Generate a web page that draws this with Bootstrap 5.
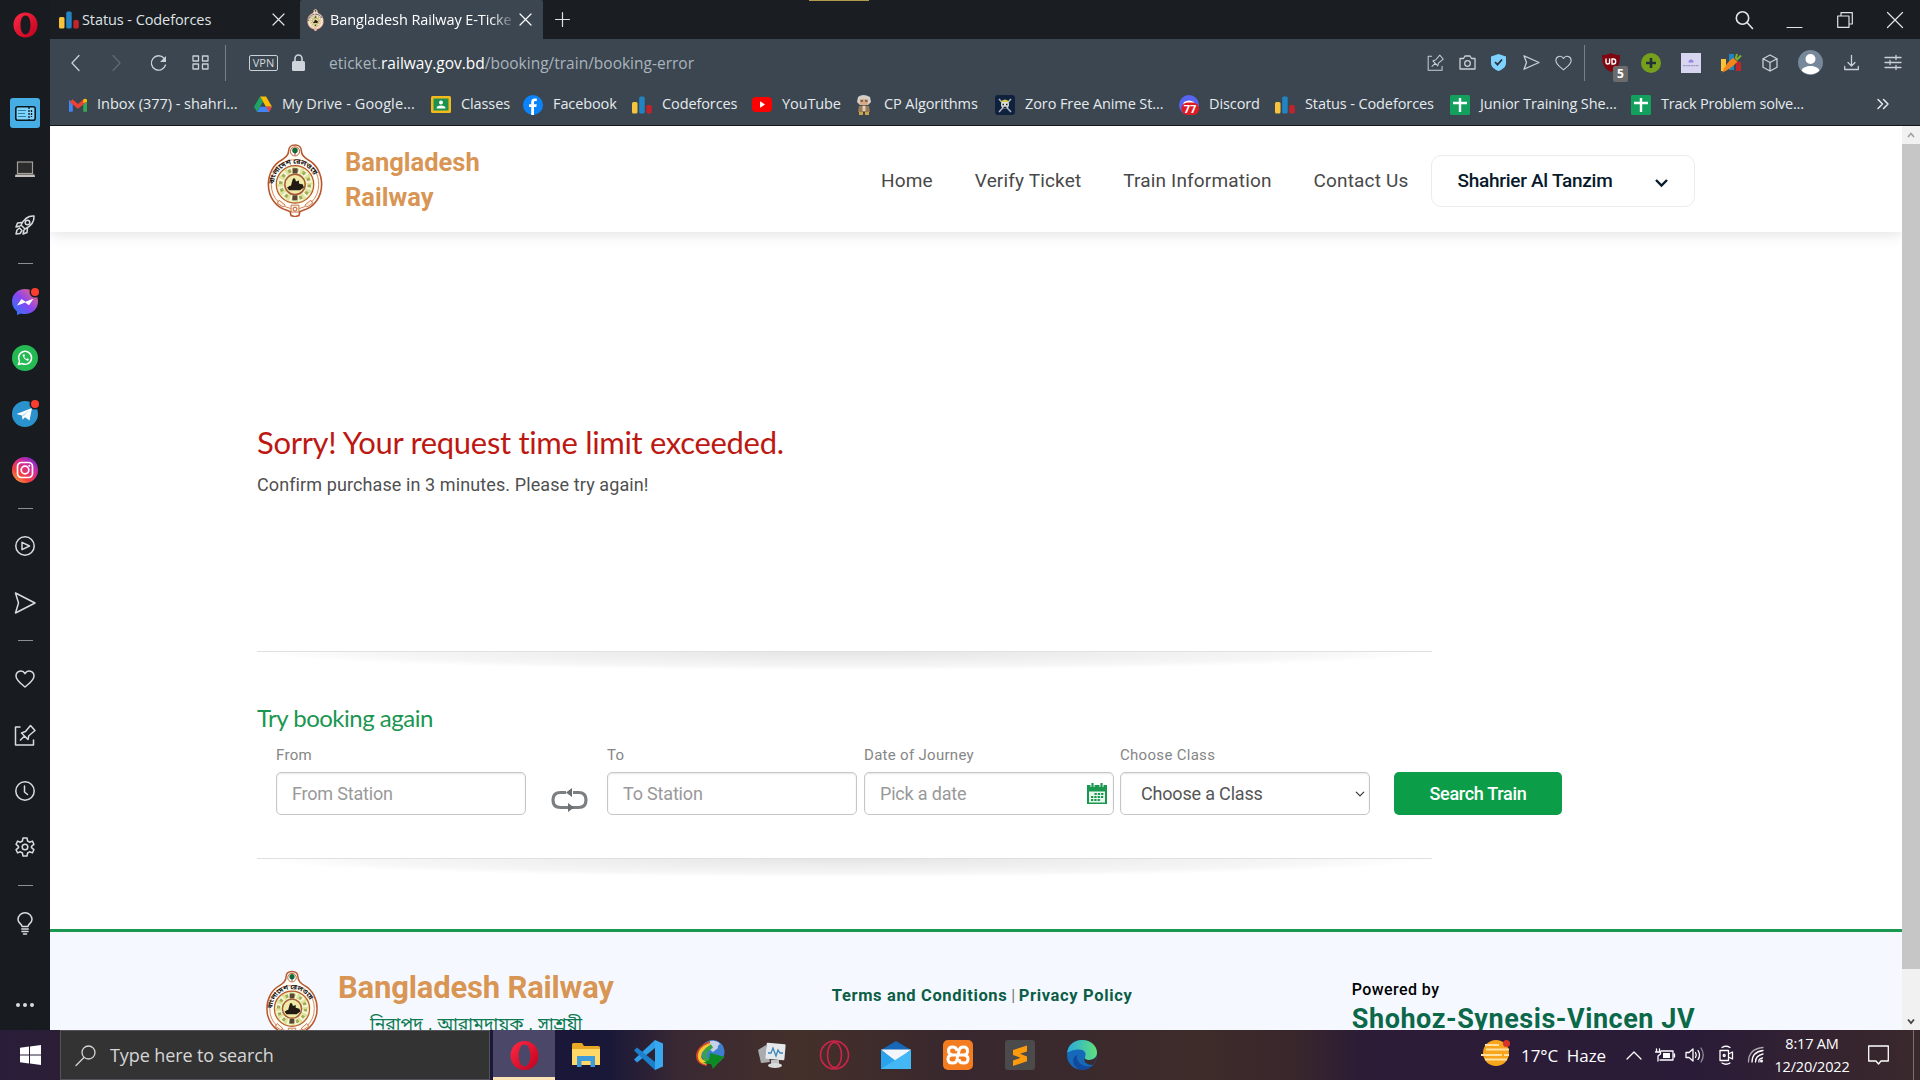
<!DOCTYPE html>
<html lang="en">
<head>
<meta charset="utf-8">
<title>Bangladesh Railway E-Ticketing Service</title>
<link href="https://cdn.jsdelivr.net/npm/bootstrap@5.3.0/dist/css/bootstrap.min.css" rel="stylesheet">
<style>
body{width:1920px;height:1080px;overflow:hidden;font-family:Roboto,"Liberation Sans",sans-serif;background:#fff}
svg{display:block;flex:none;overflow:visible}
.ln{fill:none;stroke:currentColor;stroke-width:var(--sw,1.5);stroke-linejoin:round;stroke-linecap:round}
.ui{font-family:"Open Sans","Noto Sans",sans-serif;font-size:14.5px;letter-spacing:-.1px;color:#e6eaee}
.screen{height:1030px}
/* browser side panel */
.side{width:50px;background:#181c20;color:#d8dcdf}
.side .logo-o{height:85px;padding-top:12px}
.side .it{height:56.2px}
.side .sep{height:20px}
.side .sep i{width:15px;height:1px;background:#8b9095}
.tile{width:30px;height:30px;border-radius:3px;background:#46aee4}
.dot{position:absolute;left:19px;top:14px;width:8px;height:8px;border-radius:50%;background:#ff3d2e;box-shadow:0 0 0 1.5px #181c20}
/* tabs */
.tabs{height:39px;background:#1a1d22;position:relative;color:#dfe3e6;--sw:1.2}
.tabs .goldbar{position:absolute;left:759px;top:0;width:60px;height:1px;background:#b59a4e}
.tab1{width:250px;padding-left:9px}
.tab2{width:243px;background:#3b4650;padding-left:7px;border-radius:2px 2px 0 0;color:#fff}
.tab1 .ttl{width:190px;margin-left:3px;letter-spacing:-.08px}
.tab2 .ttl{width:183px;margin-left:6px;letter-spacing:-.1px;-webkit-mask-image:linear-gradient(90deg,#000 88%,rgba(0,0,0,.15))}
.plus{margin-left:12px}
.win{margin-right:17px;color:#e2e5e8}
.win svg:nth-child(1){margin-right:34px;--sw:1.6}
.win svg:nth-child(2){margin-right:35px}
.win svg:nth-child(3){margin-right:34px}
/* address bar */
.addr{height:47px;background:#3b4650;color:#c9d0d6;--sw:1.3}
.vr-line{width:1px;height:36px;background:#75808a}
.vpn{width:29px;height:16px;border:1px solid #c9d0d6;border-radius:2px;font-size:11px;line-height:14px;letter-spacing:0;color:#d4dade}
.url{font-size:15.5px;letter-spacing:0;color:#aab4bd;margin-left:24px;padding-top:2px}
.url b{font-weight:400;color:#fff}
.bad{position:absolute;left:11px;top:13px;width:15px;height:16px;background:#6b6b6b;border-radius:2px;font:bold 12px/16px "Open Sans",sans-serif;color:#fff}
/* bookmarks */
.marks{height:40px;background:#3b4650;border-bottom:1px solid #15181b;padding:0 0 3px 19px}
.marks .bm{gap:10px}
.marks .bm svg{margin-top:1px}
.marks .bm:nth-child(1){width:185px;letter-spacing:-.03px}.marks .bm:nth-child(2){width:177px;letter-spacing:.1px}.marks .bm:nth-child(3){width:92px}
.marks .bm:nth-child(4){width:109px}.marks .bm:nth-child(5){width:120px}.marks .bm:nth-child(6){width:103px}
.marks .bm:nth-child(7){width:140px}.marks .bm:nth-child(8){width:184px}.marks .bm:nth-child(9){width:96px}
.marks .bm:nth-child(10){width:175px}.marks .bm:nth-child(11){width:181px}.marks .bm:nth-child(12){width:246px}
/* site */
.site{width:1852px;background:#fff;overflow:hidden}
.top{height:106px;padding:2px 0 0 217px;box-shadow:0 2px 14px rgba(0,0,0,.12);position:relative}
.brand{font-weight:700;font-size:25.5px;line-height:35px;color:#d99554;width:480px;margin-left:22px}
.menu a{font-size:19px;letter-spacing:.16px;color:#484848;text-decoration:none}
.menu{gap:42px;margin-left:56px;padding-top:2px}
.user{width:264px;height:52px;border:1px solid #ececec;border-radius:10px;margin:2px 0 0 23px;padding:0 26px 0 25px;font-weight:500;font-size:19px;letter-spacing:-.27px;color:#071a2c}
.msg{margin:192px 0 0 207px}
.msg h1{font:400 31px/36px Lato,sans-serif;letter-spacing:-.32px;color:#bd1812;margin:0 0 13px}
.msg p{font-size:18px;line-height:24px;letter-spacing:.1px;color:#505050;margin:0}
.rule{width:1175px;height:19px;margin-left:207px;border-top:1px solid #e0e0e0;background:radial-gradient(50% 100% at 50% 0,rgba(0,0,0,.1),rgba(0,0,0,.06) 50%,rgba(0,0,0,.035) 80%,transparent)}
.again{font:400 24px/30px Lato,sans-serif;letter-spacing:-.5px;color:#1b9650;margin:33px 0 12px 207px}
.book{margin-left:226px}
.book label{display:block;font-size:15px;line-height:20px;letter-spacing:.3px;color:#868686;margin-bottom:7px}
.fld{width:250px;position:relative}
.fld .form-control,.fld .form-select{height:43px;border:1px solid #c6c6c6;border-radius:5px;font-size:18px;letter-spacing:-.18px;padding:0 15px 1px;box-shadow:inset 0 1px 2px rgba(0,0,0,.1);color:#555}
.fld .form-control::placeholder{color:#999}
.fld .form-select{padding-left:20px;background-size:10px 12px;background-position:right 4px center;color:#555}
.fld .cal{position:absolute;right:7px;top:38px}
.swap{width:81px;padding-top:27px}
.go{width:168px;height:43px;margin:27px 0 0 24px;border-radius:5px;background:#0c9d49;border:0;color:#fff;font-size:18px;font-weight:500;letter-spacing:-.3px;padding:0 0 1px}
.foot{height:110px;margin-top:52px;border-top:3px solid #1b9850;background:#f5f9ff;padding-left:216px}
.foot .fname{font-weight:700;font-size:31px;line-height:36px;letter-spacing:-.18px;color:#d99554}
.foot .bn{font:400 17.6px/26px "Liberation Sans","Noto Sans Bengali",sans-serif;color:#0c7a50;margin:5px 0 0 32px;white-space:nowrap}
.foot .links{font-weight:700;font-size:16.5px;color:#0b5d45;letter-spacing:.64px;margin:52px 0 0 218px;line-height:24px;width:519px}
.foot .links span{font-weight:400;letter-spacing:0;font-size:16px;color:#777;margin:0 -1px 0 -1px}
.foot .pw{font-weight:500;font-size:16px;letter-spacing:.42px;color:#000;line-height:24px}
.foot .jv{font-weight:700;font-size:27px;letter-spacing:.55px;color:#0b6848;line-height:34px}
.sbar{width:18px;background:#f1f1f1}
.sbar .thumb{height:825px;background:#c6c6c6}
/* taskbar */
.task{height:50px;--sw:1.3;background:linear-gradient(90deg,#291d3a 0,#2b1e35 60px,#1a173a 500px,#1a1838 610px,#3a2933 680px,#44302a 800px,#38272e 960px,#3e2c2b 1200px,#38262c 1300px,#2c1c36 1360px,#2a1b38 1700px,#36252e 1850px,#3a282c 1920px)}
.start{width:60px}
.find{width:430px;background:#333;border:1px solid #55525a;color:#d6d6d6;font-size:18px;padding-left:14px;gap:14px}
.tapp{width:62px}
.tapp.on{background:#4a4768;border-bottom:3px solid #fbe3b5;padding-top:3px;margin-left:3px}
.tray{color:#fff;padding-right:6px}
.tray .wx{font-size:17px;letter-spacing:-.08px;margin:2px 20px 0 11px}
.tray .clk{font-size:14.5px;line-height:23px;letter-spacing:-.18px;width:76px;margin:0 18px 0 10px}
.tray .edge-line{width:1px;height:50px;background:#77707a;margin-left:24px}
</style>
<script src="https://cdn.jsdelivr.net/npm/bootstrap@5.3.0/dist/js/bootstrap.bundle.min.js"></script>
</head>
<body>
<svg width="0" height="0" class="position-absolute">
<defs>
<linearGradient id="gOp" x1="0" y1="0" x2="1" y2="1"><stop offset="0" stop-color="#ff2a45"/><stop offset="1" stop-color="#c0001c"/></linearGradient>
<linearGradient id="gMs" x1="0" y1="1" x2="1" y2="0"><stop offset="0" stop-color="#1d7dfb"/><stop offset=".5" stop-color="#8a45f0"/><stop offset="1" stop-color="#ff6b6b"/></linearGradient>
<linearGradient id="gIg" x1="0" y1="1" x2=".8" y2="0"><stop offset="0" stop-color="#fdc43f"/><stop offset=".35" stop-color="#f4413d"/><stop offset=".7" stop-color="#d12a9e"/><stop offset="1" stop-color="#7a2cd0"/></linearGradient>
<linearGradient id="gEd" x1="0" y1="0" x2="1" y2="0"><stop offset="0" stop-color="#2aa9e0"/><stop offset="1" stop-color="#5fe07a"/></linearGradient>
<path id="arcBn" d="M7.2 46a21.300 21.300 0 1 1 41.600 0"/>
</defs>
<symbol id="opera" viewBox="0 0 26 26"><path fill="url(#gOp)" fill-rule="evenodd" d="M13 0c7 0 12.500 5.500 12.500 13S20 26 13 26 .5 20.500 .5 13 6 0 13 0zM13 3.200C9.700 3.200 7.800 7.500 7.800 13s1.900 9.800 5.200 9.800 5.200-4.300 5.200-9.800S16.300 3.200 13 3.200z"/></symbol>
<symbol id="cf" viewBox="0 0 20 20"><rect y="7" width="5.500" height="11.500" rx="1.500" fill="#f5c43c"/><rect x="7.200" y="1.500" width="5.500" height="17" rx="1.500" fill="#2384c4"/><rect x="14.300" y="10" width="5.500" height="8.500" rx="1.500" fill="#c0242c"/></symbol>
<symbol id="sheet" viewBox="0 0 20 20"><rect width="20" height="20" rx="1.500" fill="#12a05c"/><path d="M10 3v14M3 8h14" stroke="#fff" stroke-width="2.400"/></symbol>
<symbol id="send" viewBox="0 0 22 22"><path class="ln" d="M1.500 1l19.500 10-19.500 10 3-10z"/></symbol>
<symbol id="heart" viewBox="0 0 20 18"><path class="ln" d="M10 17C6 13.500 1 10.500 1 6c0-5 6.500-6.800 9-2.300C12.500-.8 19 1 19 6c0 4.500-5 7.500-9 11z"/></symbol>
<symbol id="pin" viewBox="0 0 22 22"><path class="ln" d="M6 3H1.500v18h18v-5M6.500 16l4-4M7.500 9l6.500 6.500.8-3.800L21 6.500 16.500 1.500 11.500 7.500z"/></symbol>
<symbol id="rail" viewBox="0 0 56 74">
<path d="M28 1c4.300 0 6.500 2.800 6.500 6.200 0 4.500 2.500 6.500 7 9C50.500 21 55 31 55 41c0 13-8 23-18 26l-4 1.500-1 4-4 1.300-4-1.300-1-4-4-1.500C9 64 1 54 1 41c0-10 4.500-20 13.500-24.800 4.500-2.500 7-4.500 7-9C21.500 3.800 23.700 1 28 1z" fill="#fffdf6" stroke="#b8562c" stroke-width="1.600"/>
<path d="M28 16c14 0 24 10 24 25S41 65 28 66C15 65 4 56 4 41s10-25 24-25z" fill="none" stroke="#c9683a" stroke-width=".8"/>
<circle cx="28" cy="7.500" r="4.600" fill="#fff" stroke="#b8562c"/><circle cx="28" cy="6.500" r="2.800" fill="#146a35"/><path d="M27.500 8h1v3h-1z" fill="#333"/>
<circle cx="28" cy="41" r="19" fill="#dfe39a" stroke="#b8562c" stroke-width="1.200"/>
<circle cx="28" cy="41" r="14.500" fill="none" stroke="#f4f6dc" stroke-width="6.500" stroke-dasharray="5 2.600"/><circle cx="28" cy="41" r="14.500" fill="none" stroke="#a3ae52" stroke-width="3.600" stroke-dasharray="3 4.600"/>
<path d="M25.500 24.500h5v5.500h-5zM25.500 52h5v5h-5z" fill="#5b4634"/>
<circle cx="28" cy="41" r="10.300" fill="#efeaa8" stroke="#a85a35" stroke-width="1.500"/><path d="M20 44c2-1 3-2 4-2l1-4 1-3h2l1 3 3-1v3l4 1 1 3-4 3H22z" fill="#221a14"/>
<path d="M12 57l6 5-2 2-6-4zM44 57l-6 5 2 2 6-4zM24 62h8v7h-8z" fill="#fff3e0" stroke="#b8562c" stroke-width=".8"/><circle cx="28" cy="66" r="2" fill="none" stroke="#b8562c"/>
<text font-family="Noto Sans Bengali,sans-serif" font-size="7.200" font-weight="700" fill="#151515"><textPath href="#arcBn" startOffset="5">বাংলাদেশ রেলওয়ে</textPath></text>
</symbol>
</svg>

<div class="screen d-flex">
  <nav class="side d-flex flex-column align-items-center">
    <div class="logo-o"><svg width="25" height="26"><use href="#opera"/></svg></div>
    <div class="it d-flex align-items-center"><div class="tile d-flex align-items-center justify-content-center"><svg width="21" height="15" viewBox="0 0 21 15"><rect x=".8" y=".8" width="19.400" height="13.400" rx="2" fill="#7fd5fb" stroke="#0c1820" stroke-width="1.600"/><path d="M14 1v13M16.500 4v7" stroke="#0c1820" stroke-width="1.300" stroke-dasharray="2 1"/><path d="M3 4.500h8M3 7.500h7M3 10.500h8" stroke="#2a80ab"/></svg></div></div>
    <div class="it d-flex align-items-center"><svg width="20" height="17" viewBox="0 0 20 17"><rect x="2.500" y="1" width="15" height="11.500" fill="#2c2c2c" stroke="#a59f9a" stroke-width="1.200"/><path d="M.5 13.500h19l.5 2.500H0z" fill="#c5c0ba"/></svg></div>
    <div class="it d-flex align-items-center"><svg width="20" height="20" viewBox="0 0 20 20"><path class="ln" d="M19 1c-6-.5-10 3-13 9l4 4c6-3 9.500-7 9-13zM7 7.500L2.500 8 1 12l4-1M12.500 13L12 17.500 8 19l1-4M4.500 13l2.500 2.500L5 18.500l-4 .5 1-4z"/><circle class="ln" cx="12.500" cy="7.500" r="2.300"/></svg></div>
    <div class="sep d-flex align-items-center"><i></i></div>
    <div class="it d-flex align-items-center position-relative"><svg width="26" height="26" viewBox="0 0 26 26"><path fill="url(#gMs)" d="M13 0c7.500 0 13 5.500 13 12.500S20.500 25 13 25c-1.500 0-2.700-.2-4-.6L5 26v-3.600C2 20.200 0 16.800 0 12.500 0 5.500 5.500 0 13 0z"/><path fill="#fff" d="M5 16.500l4.500-6.500 4 2.700 3-1.200 5-1.800-4.500 6.500-4-2.700-3.500 1.500z"/></svg><span class="dot"></span></div>
    <div class="it d-flex align-items-center"><svg width="26" height="26" viewBox="0 0 26 26"><circle cx="13" cy="13" r="13" fill="#25b954"/><path d="M6.500 19.500l1-3.300a6.500 6.500 0 1 1 2.400 2.300z" fill="none" stroke="#fff" stroke-width="1.500"/><path d="M10.500 10c.8 3 2.500 5 5.500 6l1-1.800-1.800-1-.8.800c-1-.4-1.800-1.300-2.200-2.300l.8-.7-.8-1.900z" fill="#fff"/></svg></div>
    <div class="it d-flex align-items-center position-relative"><svg width="26" height="26" viewBox="0 0 26 26"><circle cx="13" cy="13" r="13" fill="#2a92cc"/><path d="M4.500 13L20 7l-2.500 12.500-4.500-3.300-2.500 2.600-.5-4.300z" fill="#fff"/><path d="M10 14.500L17.500 9l-6 6.200" fill="#bcd7e8"/></svg><span class="dot"></span></div>
    <div class="it d-flex align-items-center"><svg width="26" height="26" viewBox="0 0 26 26"><circle cx="13" cy="13" r="13" fill="url(#gIg)"/><g fill="none" stroke="#fff" stroke-width="1.700"><rect x="5.500" y="5.500" width="15" height="15" rx="4"/><circle cx="13" cy="13" r="3.800"/></g><circle cx="17.300" cy="8.700" r="1" fill="#fff"/></svg></div>
    <div class="sep d-flex align-items-center"><i></i></div>
    <div class="it d-flex align-items-center"><svg width="20" height="20" viewBox="0 0 20 20"><circle class="ln" cx="10" cy="10" r="9.200"/><path class="ln" d="M7 6.300l7.500 3.700L7 13.700z"/></svg></div>
    <div class="it d-flex align-items-center"><svg width="22" height="22"><use href="#send"/></svg></div>
    <div class="sep d-flex align-items-center"><i></i></div>
    <div class="it d-flex align-items-center"><svg width="20" height="18"><use href="#heart"/></svg></div>
    <div class="it d-flex align-items-center"><svg width="22" height="22"><use href="#pin"/></svg></div>
    <div class="it d-flex align-items-center"><svg width="20" height="20" viewBox="0 0 20 20"><circle class="ln" cx="10" cy="10" r="9.200"/><path class="ln" d="M9.500 5v6l3 2.500"/></svg></div>
    <div class="it d-flex align-items-center"><svg width="18" height="20" viewBox="0 0 18 20"><path class="ln" d="M7 1h4l.6 3 2 1.200 2.800-1.100 1.500 3.200L15.500 9.300v1.400l2.400 2-1.500 3.200-2.800-1.100-2 1.200L11 19H7l-.6-3-2-1.200-2.800 1.100L.1 12.700l2.400-2V9.300L.1 7.300l1.500-3.200 2.800 1.100 2-1.200z"/><circle class="ln" cx="9" cy="10" r="2.800"/></svg></div>
    <div class="sep d-flex align-items-center"><i></i></div>
    <div class="it d-flex align-items-center"><svg width="16" height="23" viewBox="0 0 16 23"><path class="ln" d="M5 14.500C5 12 1 11 1 7.500a7 6.800 0 0 1 14 0c0 3.500-4 4.500-4 7zM4.800 17h6.400M5 19.500h6M6.500 22h3"/></svg></div>
    <div class="mt-auto" style="padding-bottom:23px"><svg width="18" height="4" viewBox="0 0 18 4" fill="#d8dcdf"><circle cx="2" cy="2" r="2"/><circle cx="9" cy="2" r="2"/><circle cx="16" cy="2" r="2"/></svg></div>
  </nav>

  <div class="flex-fill d-flex flex-column">
    <header class="tabs ui d-flex align-items-stretch">
      <span class="goldbar"></span>
      <div class="tab1 d-flex align-items-center"><svg width="20" height="20"><use href="#cf"/></svg><span class="ttl text-nowrap">Status - Codeforces</span><svg width="13" height="13" viewBox="0 0 13 13"><path class="ln" d="M1 1l11 11M12 1L1 12"/></svg></div>
      <div class="tab2 d-flex align-items-center"><svg width="17" height="22"><use href="#rail"/></svg><span class="ttl text-nowrap">Bangladesh Railway E-Ticke</span><svg class="ms-auto" width="13" height="13" viewBox="0 0 13 13" style="margin-right:11px"><path class="ln" d="M1 1l11 11M12 1L1 12"/></svg></div>
      <div class="plus d-flex align-items-center"><svg width="15" height="15" viewBox="0 0 15 15"><path class="ln" d="M7.500 .5v14M.5 7.500h14"/></svg></div>
      <div class="win ms-auto d-flex align-items-center">
        <svg width="18" height="18" viewBox="0 0 18 18"><circle class="ln" cx="7.500" cy="7" r="6.200"/><path class="ln" d="M12 11.500L17.500 17.500"/></svg>
        <svg width="15" height="16" viewBox="0 0 15 16"><path class="ln" d="M0 15.500h15"/></svg>
        <svg width="16" height="16" viewBox="0 0 16 16"><path class="ln" d="M4 4V.7h11.300V12H12M.7 4h11.300v11.300H.7z"/></svg>
        <svg width="16" height="16" viewBox="0 0 16 16"><path class="ln" d="M.5 .5l15 15M15.500 .5l-15 15"/></svg>
      </div>
    </header>

    <div class="addr ui d-flex align-items-center">
      <svg width="9" height="16" viewBox="0 0 9 16" style="margin-left:21px"><path class="ln" d="M8 .5L1 8l7 7.500"/></svg>
      <svg width="9" height="16" viewBox="0 0 9 16" style="margin-left:32px;color:#5f6a74"><path class="ln" d="M1 .5L8 8l-7 7.500"/></svg>
      <svg width="17" height="16" viewBox="0 0 17 16" style="margin-left:29px"><path class="ln" d="M15.500 10A7.200 7.200 0 1 1 14 3.200"/><path d="M16 1v6h-6z" fill="currentColor"/></svg>
      <svg width="17" height="15" viewBox="0 0 17 15" style="margin-left:25px"><path class="ln" d="M1 1h5.500v5H1zM10.500 1H16v5h-5.500zM1 9h5.500v5H1zM10.500 9H16v5h-5.500z"/></svg>
      <span class="vr-line" style="margin-left:16px"></span>
      <span class="vpn text-center" style="margin-left:23px">VPN</span>
      <svg width="13" height="17" viewBox="0 0 13 17" style="margin-left:14px"><rect y="7" width="13" height="10" rx="1.500" fill="#cfd6db"/><path d="M3 8V4.500a3.500 3.500 0 0 1 7 0V8" fill="none" stroke="#cfd6db" stroke-width="1.600"/></svg>
      <span class="url text-nowrap">eticket.<b>railway.gov.bd</b>/booking/train/booking-error</span>
      <svg class="ms-auto" width="17" height="17"><use href="#pin"/></svg>
      <svg width="17" height="15" viewBox="0 0 17 15" style="margin-left:15px"><path class="ln" d="M1 3.500h3.500L6 1h5l1.500 2.500H16V14H1z"/><circle class="ln" cx="8.500" cy="8.500" r="2.800"/></svg>
      <svg width="15" height="17" viewBox="0 0 15 17" style="margin-left:15px"><path d="M7.500 0L15 2.500V9c0 4-3.500 6.500-7.500 8C3.500 15.500 0 13 0 9V2.500z" fill="#7fd2ff"/><path d="M4 8l2.500 2.700L11 5.500" fill="none" stroke="#27323b" stroke-width="1.800"/></svg>
      <svg width="17" height="15" viewBox="0 0 17 15" style="margin-left:17px"><path class="ln" d="M1 .8l15 6.700-15 6.700 2.500-6.700z"/></svg>
      <svg width="17" height="16" style="margin-left:15px"><use href="#heart"/></svg>
      <span class="vr-line" style="margin-left:12px"></span>
      <span class="position-relative" style="margin-left:17px"><svg width="18" height="19" viewBox="0 0 18 19"><path d="M9 0c3 1.500 5.500 2 9 2 0 9-2 13.500-9 17C2 15.500 0 11 0 2c3.500 0 6-.5 9-2z" fill="#800610"/><path d="M4 5.500v4q0 1.500 1.800 1.500t1.800-1.500v-4M10 11V6h1.500q2.200 0 2.200 2.500T11.500 11z" fill="none" stroke="#fff" stroke-width="1.400"/></svg><span class="bad text-center">5</span></span>
      <svg width="20" height="20" viewBox="0 0 20 20" style="margin-left:21px"><circle cx="10" cy="10" r="10" fill="#76a01c"/><path d="M10 5v10M5 10h10" stroke="#23303a" stroke-width="2.600"/></svg>
      <svg width="20" height="20" viewBox="0 0 20 20" style="margin-left:20px"><rect width="20" height="20" fill="#d7d5f0"/><path d="M7.500 9.500a2.500 3 0 0 1 5 0z" fill="#8e86e8"/><path d="M2 12.700h16" stroke="#8d8ab5" stroke-dasharray="2 .6"/></svg>
      <svg width="20" height="20" viewBox="0 0 20 20" style="margin-left:20px"><rect y="6" width="5" height="12" fill="#f5c43c"/><rect x="8" y="1" width="5" height="16" fill="#2384c4"/><rect x="15" y="9" width="5" height="9" fill="#c0242c"/><path d="M1 19.500Q5 10 12 5L16.500 8.500Q10 16 1 19.500z" fill="#f6861a"/><path d="M14.500 6l1.500-5M15.500 7L20 2.500" stroke="#7cb52c" stroke-width="2"/></svg>
      <svg width="16" height="18" viewBox="0 0 16 18" style="margin-left:21px"><path class="ln" d="M8 1l7 3.700v8.600L8 17l-7-3.700V4.700zM1 4.700L8 8.500l7-3.800M8 8.500V17"/></svg>
      <svg width="25" height="25" viewBox="0 0 25 25" style="margin-left:20px"><circle cx="12.500" cy="12.500" r="12.500" fill="#77889a"/><circle cx="12.500" cy="9" r="5" fill="#fff"/><path d="M3.500 20.500c2-6 16-6 18 0a12.500 12.500 0 0 1-18 0z" fill="#fff"/></svg>
      <svg width="15" height="15" viewBox="0 0 15 15" style="margin-left:21px"><path class="ln" d="M7.500 .5v10M4 7.500l3.500 3.500L11 7.500M.7 11.500v3h13.600v-3"/></svg>
      <svg width="16" height="15" viewBox="0 0 16 15" style="margin:0 19px 0 26px"><path class="ln" d="M0 2.500h16M0 7.500h16M0 12.500h16M11 .5v4M5 5.500v4M11 10.500v4"/></svg>
    </div>

    <div class="marks ui d-flex align-items-center text-nowrap">
      <div class="bm d-flex align-items-center"><svg width="18" height="14" viewBox="0 0 19 14"><path d="M0 1.500V14h4V5z" fill="#4285f4"/><path d="M19 1.500V14h-4V5z" fill="#34a853"/><path d="M2.200 2.500L9.500 8.500 16.800 2.500" fill="none" stroke="#ea4335" stroke-width="4"/><path d="M15 5V1.500Q17-.5 19 1.500V3.500z" fill="#fbbc04"/></svg>Inbox (377) - shahri...</div>
      <div class="bm d-flex align-items-center"><svg width="18" height="17" viewBox="0 0 19 17"><path d="M6.300 0h6.400L19 11h-6.400z" fill="#fbbc04"/><path d="M6.300 0l3.200 5.500L3.200 16.500 0 11z" fill="#1ea362"/><path d="M6.500 11H19l-3.200 5.500H3.200z" fill="#4285f4"/><path d="M12.700 11H19l-3.200 5.500z" fill="#ea4335"/></svg>My Drive - Google...</div>
      <div class="bm d-flex align-items-center"><svg width="20" height="17" viewBox="0 0 20 17"><rect width="20" height="17" rx="1.500" fill="#f4b91a"/><rect x="2.500" y="2.500" width="15" height="12" fill="#1c9150"/><circle cx="10" cy="6.500" r="2" fill="#fff"/><path d="M5.500 12.500q0-3 4.500-3t4.500 3z" fill="#fff"/></svg>Classes</div>
      <div class="bm d-flex align-items-center"><svg width="20" height="20" viewBox="0 0 20 20"><circle cx="10" cy="10" r="10" fill="#0b84fb"/><path d="M13.800 6h-1.500q-1.300 0-1.300 1.300V9.200h2.700l-.4 2.800H11v8H8.200v-8H6V9.200h2.200V7q0-3.500 3.500-3.500h2.100z" fill="#fff"/></svg>Facebook</div>
      <div class="bm d-flex align-items-center"><svg width="20" height="20"><use href="#cf"/></svg>Codeforces</div>
      <div class="bm d-flex align-items-center"><svg width="20" height="15" viewBox="0 0 20 15"><rect width="20" height="15" rx="4" fill="#f00"/><path d="M8 4.300l5 3.200-5 3.200z" fill="#fff"/></svg>YouTube</div>
      <div class="bm d-flex align-items-center gap-0"><svg width="29" height="20" viewBox="0 0 29 20"><path d="M3 2q5-4 12 0l1 5-3 3H5L2 7z" fill="#d5d0c8"/><path d="M5 4h8v5q-4 3-8 0z" fill="#d9a983"/><path d="M4 11h10l1 6H3z" fill="#9a7b52"/><path d="M7.500 11h3v5h-3z" fill="#d8cfc4"/><path d="M4 17h4v3H4zM10 17h4v3h-4z" fill="#c9a24e"/><path d="M5.500 6h2.500M10 6h2.500" stroke="#555" stroke-width="1.400"/></svg>CP Algorithms</div>
      <div class="bm d-flex align-items-center"><svg width="20" height="20" viewBox="0 0 20 20"><rect width="20" height="20" rx="3" fill="#10213d"/><path d="M4 4l12 13M16 4L4 17" stroke="#aab3bd" stroke-width="1.600"/><circle cx="10" cy="9.500" r="4" fill="#dcdcd4"/><path d="M5.500 7q4.500-5 9 0z" fill="#d8c84a"/><path d="M7.500 9.500h1.500M11 9.500h1.500M8.500 12.500h3" stroke="#10213d" stroke-width="1.600"/></svg>Zoro Free Anime St...</div>
      <div class="bm d-flex align-items-center"><svg width="20" height="20" viewBox="0 0 20 20"><circle cx="10" cy="10" r="10" fill="#5865f2"/><path d="M5 7q5-3 10 0l1 3H4z" fill="#fff"/><rect x="2.500" y="7.500" width="17.500" height="12.500" rx="6" fill="#e01b24"/><text x="11" y="18" text-anchor="middle" font-family="Open Sans,sans-serif" font-size="11" font-weight="700" fill="#fff" letter-spacing="0">77</text></svg>Discord</div>
      <div class="bm d-flex align-items-center"><svg width="20" height="20"><use href="#cf"/></svg>Status - Codeforces</div>
      <div class="bm d-flex align-items-center"><svg width="20" height="20"><use href="#sheet"/></svg>Junior Training She...</div>
      <div class="bm d-flex align-items-center" style="letter-spacing:-.22px"><svg width="20" height="20"><use href="#sheet"/></svg>Track Problem solve...</div>
      <svg width="12" height="10" viewBox="0 0 12 10"><path class="ln" d="M1 .5L5.500 5 1 9.500M6.500 .5L11 5l-4.500 4.500"/></svg>
    </div>

    <div class="d-flex" style="height:904px">
      <main class="site">
        <div class="top d-flex align-items-center">
          <svg width="56" height="73"><use href="#rail"/></svg>
          <div class="brand">Bangladesh<br>Railway</div>
          <nav class="menu d-flex text-nowrap"><a href="#">Home</a><a href="#">Verify Ticket</a><a href="#">Train Information</a><a href="#">Contact Us</a></nav>
          <div class="user d-flex align-items-center justify-content-between text-nowrap">Shahrier Al Tanzim<svg width="13" height="8" viewBox="0 0 13 8" class="mt-1"><path d="M1 1l5.500 5.500L12 1" fill="none" stroke="#071a2c" stroke-width="2.400"/></svg></div>
        </div>
        <section class="msg"><h1>Sorry! Your request time limit exceeded.</h1><p>Confirm purchase in 3 minutes. Please try again!</p></section>
        <div class="rule" style="margin-top:154px"></div>
        <h2 class="again">Try booking again</h2>
        <form class="book d-flex align-items-start">
          <div class="fld"><label>From</label><input class="form-control" placeholder="From Station"></div>
          <div class="swap d-flex justify-content-center"><svg width="37" height="24" viewBox="0 0 37 24" style="margin:16px 0 0 6px"><path d="M15 4.500H9.500Q2 4.500 2 12t7.500 7.500H17M22 4.500h5.500Q35 4.500 35 12t-7.500 7.500H21" fill="none" stroke="#7b7f82" stroke-width="3.200"/><path d="M15 4.500l6-4.500v9zM23 19.500l-6-4.500v9z" fill="#6c7073"/></svg></div>
          <div class="fld"><label>To</label><input class="form-control" placeholder="To Station"></div>
          <div class="fld" style="margin-left:7px"><label>Date of Journey</label><input class="form-control" placeholder="Pick a date"><svg class="cal" width="20" height="21" viewBox="0 0 20 21"><path d="M0 2h20v19H0z" fill="#1b9850"/><path d="M2 8.500h16v11H2z" fill="#e9f6ee"/><path d="M5.500 0v4M14.500 0v4" stroke="#fff" stroke-width="4"/><path d="M5.500 0v4M14.500 0v4" stroke="#1b9850" stroke-width="2.200"/><path d="M7.500 11h9M4 14h12.500M4 17h10" stroke="#1b9850" stroke-width="2" stroke-dasharray="2.300 1"/></svg></div>
          <div class="fld" style="margin-left:6px"><label>Choose Class</label><select class="form-select"><option>Choose a Class</option></select></div>
          <button class="go btn" type="button">Search Train</button>
        </form>
        <div class="rule" style="margin-top:43px"></div>
        <footer class="foot d-flex align-items-start">
          <svg width="52" height="70" style="margin-top:38px"><use href="#rail"/></svg>
          <div style="margin:38px 0 0 20px"><div class="fname text-nowrap">Bangladesh Railway</div><div class="bn">নিরাপদ . আরামদায়ক . সাশ্রয়ী</div></div>
          <div class="links text-nowrap">Terms and Conditions <span>|</span> Privacy Policy</div>
          <div style="margin:46px 0 0 1px"><div class="pw">Powered by</div><div class="jv text-nowrap">Shohoz-Synesis-Vincen JV</div></div>
        </footer>
      </main>
      <aside class="sbar d-flex flex-column align-items-center">
        <svg width="8" height="18" viewBox="0 0 8 18"><path d="M1 11l3-3.500L7 11" fill="none" stroke="#a0a0a0" stroke-width="1.600"/></svg>
        <div class="thumb w-100"></div>
        <svg class="mt-auto" width="8" height="18" viewBox="0 0 8 18"><path d="M1 7.500L4 11l3-3.500" fill="none" stroke="#444" stroke-width="1.800"/></svg>
      </aside>
    </div>
  </div>
</div>

<div class="task ui d-flex align-items-stretch">
  <div class="start d-flex align-items-center justify-content-center"><svg width="21" height="20" viewBox="0 0 21 20" fill="#fff"><path d="M0 2.800l9-1.300v8H0zM10 1.400L21 0v9.500H10zM0 10.500h9v8l-9-1.300zM10 10.500h11V20l-11-1.500z"/></svg></div>
  <div class="find d-flex align-items-center"><svg width="21" height="21" viewBox="0 0 21 21"><circle class="ln" cx="13.500" cy="7.500" r="6.500"/><path class="ln" d="M9 12.500L1 20.500"/></svg>Type here to search</div>
  <div class="tapp on d-flex align-items-center justify-content-center"><svg width="29" height="29"><use href="#opera"/></svg></div>
  <div class="tapp d-flex align-items-center justify-content-center"><svg width="28" height="24" viewBox="0 0 28 24"><path d="M0 1.500Q0 0 1.500 0H10l2 3h14.500Q28 3 28 4.500V22H0z" fill="#e8a823"/><path d="M0 6h28v16H0z" fill="#ffd867"/><path d="M5 13h18v11h-4.500v-6h-9v6H5z" fill="#3e9bdc"/></svg></div>
  <div class="tapp d-flex align-items-center justify-content-center"><svg width="30" height="30" viewBox="0 0 30 30"><path d="M22 0v8L4 22.500l-3-3z" fill="#2f9de8"/><path d="M1 10.500l3-3L22 22v8z" fill="#1c7fcb"/><path d="M22 0l8 3.500v23L22 30z" fill="#38a9f0"/></svg></div>
  <div class="tapp d-flex align-items-center justify-content-center"><svg width="30" height="30" viewBox="0 0 30 30"><circle cx="17.500" cy="12" r="12" fill="#3f7fd0"/><path d="M15 1q7-1 10 3-3 2-2 4l-5 4q-6-3-3-11z" fill="#c4d3e6"/><path d="M15 2C8 4 2 10 2 16c0 5 4 8 10 9" fill="none" stroke="#d4432b" stroke-width="2"/><path d="M15 4.500C9 7 4.500 11 4.500 16c0 3 2 6 7 7" fill="none" stroke="#f5c92c" stroke-width="3.500"/><path d="M17 6C12 9 8 13 10 18l3 3" fill="none" stroke="#3aa348" stroke-width="4"/><path d="M15 13l15 4-4 3-8 9-2-5-8-1 6-3z" fill="#0d8a24"/></svg></div>
  <div class="tapp d-flex align-items-center justify-content-center"><svg width="28" height="26" viewBox="0 0 28 26"><path d="M0 8l8-5 4 17-9 1z" fill="#a9abae"/><rect x="8" y="1.500" width="19" height="16" rx="1" fill="#e6e9ec" transform="rotate(5 17 10)"/><path d="M10 11h3l2-5 3 8 2-6 2 3h3" fill="none" stroke="#3d86b8" stroke-width="1.300"/><path d="M13 18h8v5h-8z" fill="#bfc1c4"/><ellipse cx="17" cy="23.500" rx="7" ry="2.500" fill="#d8dadc"/></svg></div>
  <div class="tapp d-flex align-items-center justify-content-center"><svg width="31" height="30" viewBox="0 0 31 30"><g fill="none" stroke="#d0234a" stroke-width="1.600"><circle cx="15.500" cy="15" r="14"/><ellipse cx="15.500" cy="15" rx="7" ry="12.500"/></g></svg></div>
  <div class="tapp d-flex align-items-center justify-content-center"><svg width="30" height="28" viewBox="0 0 30 28"><path d="M0 9L15 0l15 9v19H0z" fill="#1567b8"/><path d="M0 8.500h30L15 21z" fill="#f2f6fa"/><path d="M0 9l15 11L30 9v19H0z" fill="#2ba3ec"/><path d="M0 28l30-19v19z" fill="#43b8f5"/></svg></div>
  <div class="tapp d-flex align-items-center justify-content-center"><svg width="30" height="30" viewBox="0 0 30 30"><rect width="30" height="30" rx="5" fill="#f47c20"/><path d="M14 11Q13.500 7 9.500 7T5.500 10.800 9.500 15h11Q24.500 15 24.500 11T20.500 7 16 11M9.500 15Q5 15 5 19t4.500 4 4.500-4M20.500 15Q25 15 25 19t-4.500 4-4.500-4M14 19l2-8" fill="none" stroke="#fff" stroke-width="3"/></svg></div>
  <div class="tapp d-flex align-items-center justify-content-center"><svg width="30" height="30" viewBox="0 0 30 30"><rect width="30" height="30" rx="3" fill="#4b4b4b"/><path d="M8 10L22 5.500v6L15 13.800l7 2.700v4.800L8 26v-5.500l7.500-2.700L8 15z" fill="#ff9a0a"/></svg></div>
  <div class="tapp d-flex align-items-center justify-content-center"><svg width="30" height="30" viewBox="0 0 30 30"><circle cx="15" cy="15" r="15" fill="#1668b8"/><path d="M0 13C1 5 7 0 15 0c9 0 15 6 15 12.500C30 17 26.500 20 22 20c-3 0-5-1-4-3 2-4-1-7.500-6-7.500C6 9.500 1 12 0 13z" fill="url(#gEd)"/><path d="M10 15c-1 8 6 13 15 11-3 3-8 4.500-12 3.700C5 27 4 17 10 15z" fill="#12499a"/><path d="M18 17c-1 2 1 3 4 3 3.500 0 6-1.500 8-4-.3 3-2 7-4.500 9-5 0-10-3-7.500-8z" fill="#3c2b2e"/></svg></div>
  <div class="tray ms-auto d-flex align-items-center text-nowrap">
    <svg width="29" height="27" viewBox="0 0 29 27" class="mb-1"><circle cx="15" cy="13" r="13" fill="#f7a51c"/><path d="M4 5h14M5 9.500h23M0 15h21M23 15h5M4 19.500h22" stroke="#ffe2a3" stroke-width="2"/><circle cx="25.500" cy="3.500" r="3.500" fill="#d8332a"/></svg>
    <span class="wx">17°C&nbsp; Haze</span>
    <svg width="16" height="9" viewBox="0 0 16 9"><path class="ln" d="M1 8l7-7 7 7"/></svg>
    <svg width="20" height="14" viewBox="0 0 20 14" style="margin-left:13px"><path class="ln" d="M6 3h12v9H5M19.500 6v3M1.500 1v3M4.500 1v3M.5 4h5v2L3 8v5"/><path d="M8 5h7v5H8z" fill="#fff"/></svg>
    <svg width="20" height="16" viewBox="0 0 20 16" style="margin-left:10px"><path class="ln" d="M1 5.500h3L8 2v12l-4-3.500H1zM10.500 5.500q1.500 2.500 0 5M13 3.500q3 4.500 0 9"/><path class="ln" opacity=".5" d="M16 1q4.500 7 0 14"/></svg>
    <svg width="16" height="20" viewBox="0 0 16 20" style="margin-left:13px"><path class="ln" d="M2 5.500h8.500v10H2zM10.500 9l4-2v7l-4-2M4 2.500q4-2.500 8 0M4 18q4 2.500 8 0"/><circle class="ln" cx="6.200" cy="10.500" r="1"/></svg>
    <svg width="17" height="16" viewBox="0 0 17 16" style="margin-left:13px"><path class="ln" d="M12 15q-1-3 3.500-4M8.500 15q0-6.500 7.500-8M5 15Q5 5 16 3.500"/><path class="ln" opacity=".6" d="M1.500 15Q1.500 2 16 .5"/><circle cx="14.500" cy="14" r="1.500" fill="#fff"/></svg>
    <div class="clk text-center">8:17 AM<br>12/20/2022</div>
    <svg width="21" height="20" viewBox="0 0 21 20"><path class="ln" d="M.7 1h19.600v15H13l-2.500 3L8 16H.7z"/></svg>
    <span class="edge-line"></span>
  </div>
</div>
</body>
</html>
